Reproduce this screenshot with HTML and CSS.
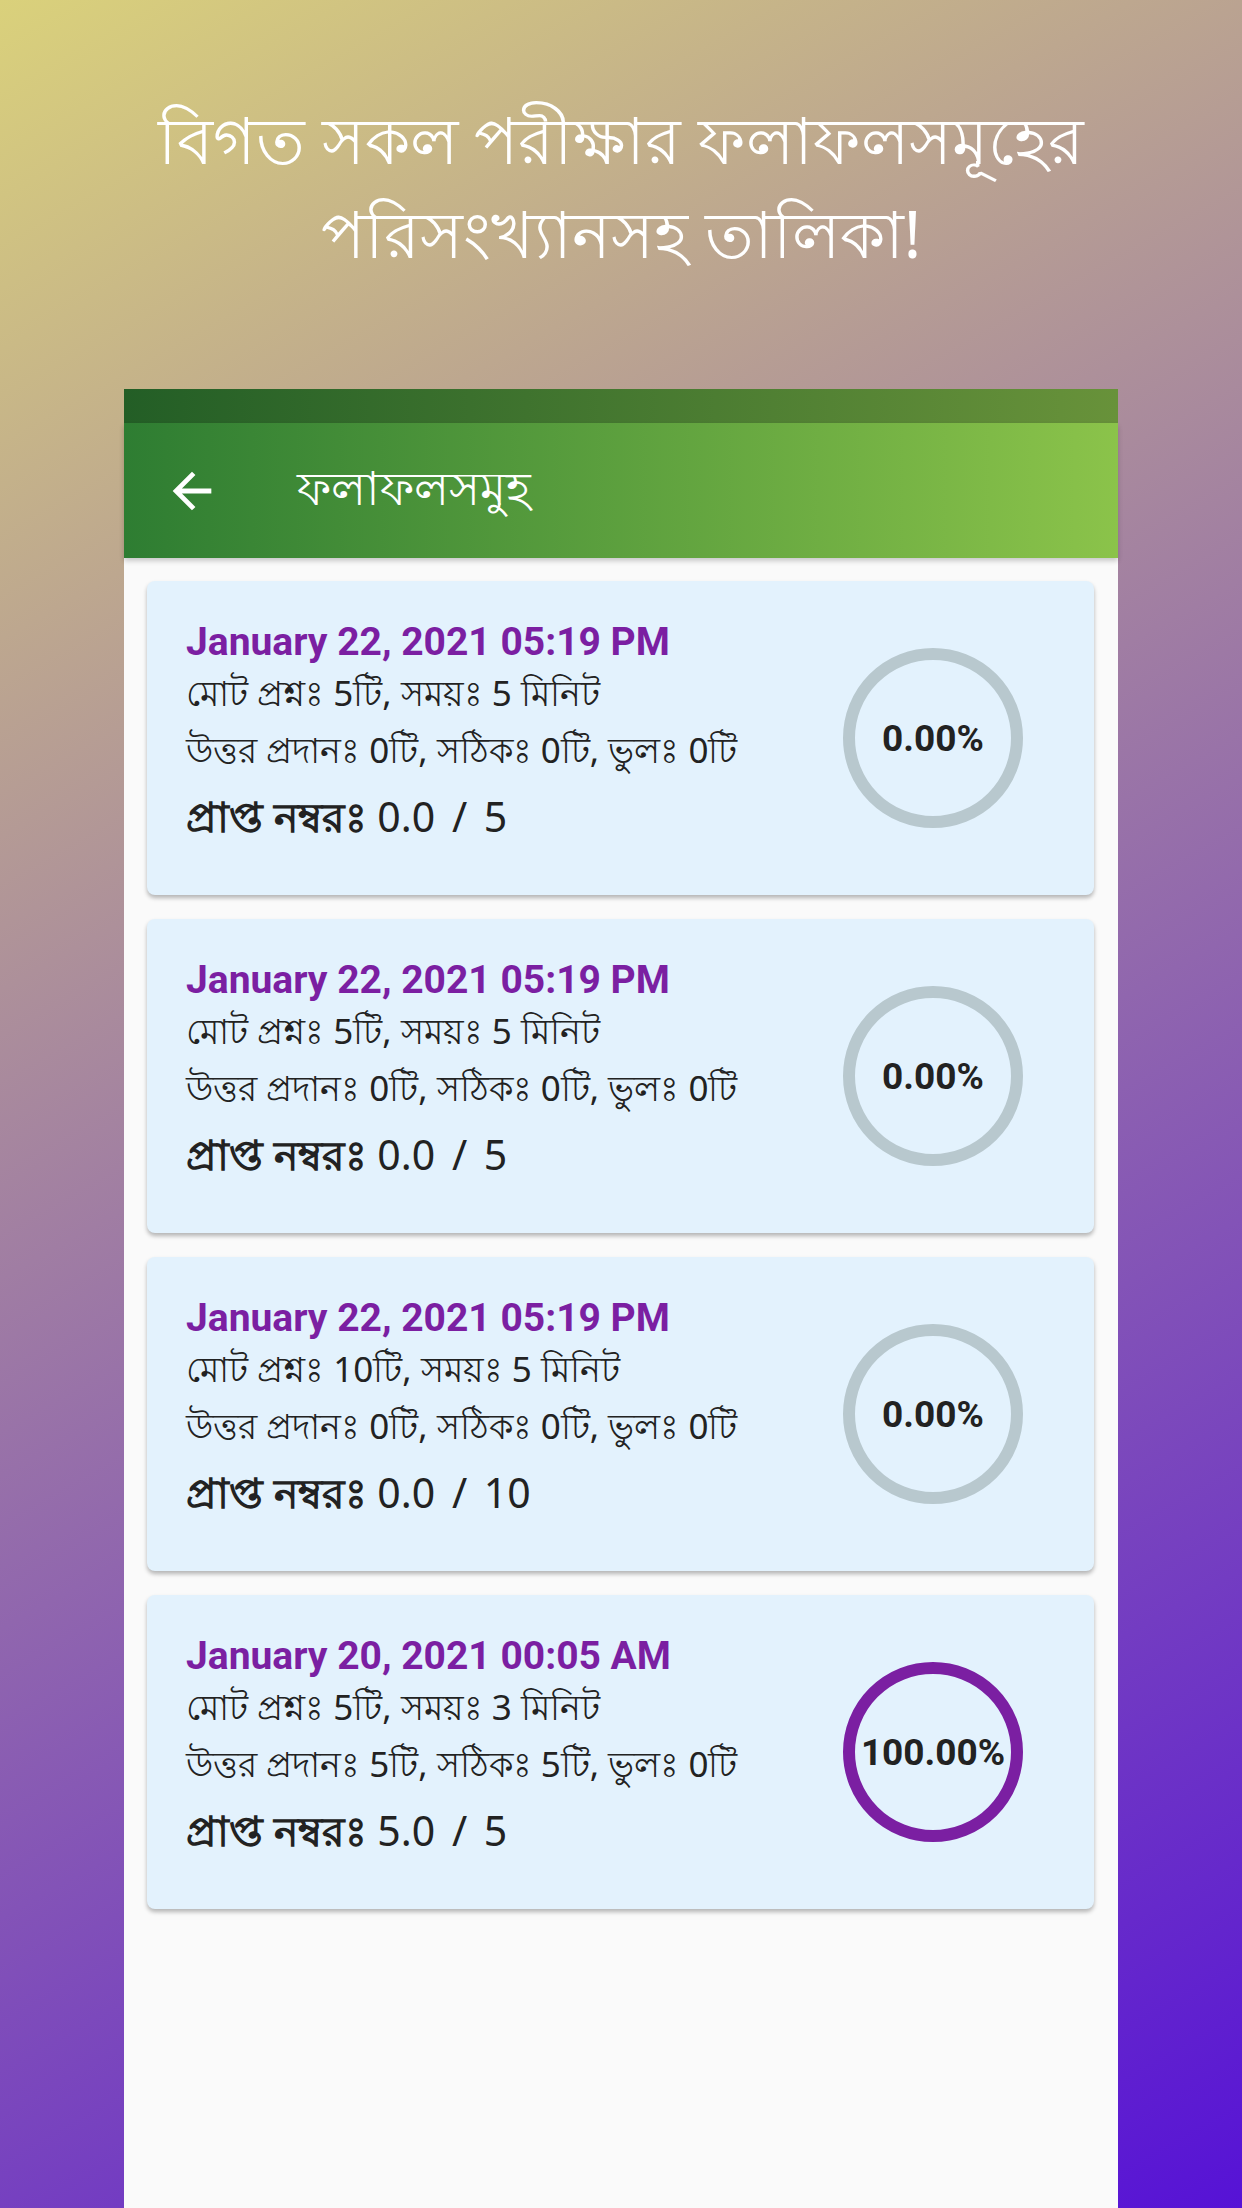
FILE: index.html
```html
<!DOCTYPE html>
<html lang="bn">
<head>
<meta charset="utf-8">
<title>ফলাফলসমুহ</title>
<link rel="stylesheet" href="styles.css">
</head>
<body>
<header class="hero">
  <h1 class="hero-title">বিগত সকল পরীক্ষার ফলাফলসমূহের<br>পরিসংখ্যানসহ তালিকা!</h1>
</header>
<main class="phone">
  <div class="statusbar"></div>
  <div class="toolbar">
    <svg class="back" viewBox="0 0 24 24" width="58" height="58"><path fill="#fff" d="M20 11H7.83l5.59-5.59L12 4l-8 8 8 8 1.41-1.41L7.83 13H20v-2z"/></svg>
    <span class="toolbar-title">ফলাফলসমুহ</span>
  </div>
  <div class="list">
    <section class="card">
      <div class="info">
        <div class="date">January 22, 2021 05:19 PM</div>
        <div class="line">মোট প্রশ্নঃ 5টি, সময়ঃ 5 মিনিট</div>
        <div class="line">উত্তর প্রদানঃ 0টি, সঠিকঃ 0টি, ভুলঃ 0টি</div>
        <div class="score">প্রাপ্ত নম্বরঃ <span class="num">0.0 / 5</span></div>
      </div>
      <div class="ring">0.00%</div>
    </section>
    <section class="card">
      <div class="info">
        <div class="date">January 22, 2021 05:19 PM</div>
        <div class="line">মোট প্রশ্নঃ 5টি, সময়ঃ 5 মিনিট</div>
        <div class="line">উত্তর প্রদানঃ 0টি, সঠিকঃ 0টি, ভুলঃ 0টি</div>
        <div class="score">প্রাপ্ত নম্বরঃ <span class="num">0.0 / 5</span></div>
      </div>
      <div class="ring">0.00%</div>
    </section>
    <section class="card">
      <div class="info">
        <div class="date">January 22, 2021 05:19 PM</div>
        <div class="line">মোট প্রশ্নঃ 10টি, সময়ঃ 5 মিনিট</div>
        <div class="line">উত্তর প্রদানঃ 0টি, সঠিকঃ 0টি, ভুলঃ 0টি</div>
        <div class="score">প্রাপ্ত নম্বরঃ <span class="num">0.0 / 10</span></div>
      </div>
      <div class="ring">0.00%</div>
    </section>
    <section class="card">
      <div class="info">
        <div class="date">January 20, 2021 00:05 AM</div>
        <div class="line">মোট প্রশ্নঃ 5টি, সময়ঃ 3 মিনিট</div>
        <div class="line">উত্তর প্রদানঃ 5টি, সঠিকঃ 5টি, ভুলঃ 0টি</div>
        <div class="score">প্রাপ্ত নম্বরঃ <span class="num">5.0 / 5</span></div>
      </div>
      <div class="ring ring-full">100.00%</div>
    </section>
  </div>
</main>
</body>
</html>
```
FILE: styles.css
```css
html, body {
  margin: 0;
  padding: 0;
}
body {
  width: 1242px;
  height: 2208px;
  overflow: hidden;
  background: linear-gradient(150.6deg, #dad17b 0%, #5612d6 100%);
  font-family: "Noto Sans", "Liberation Sans", sans-serif;
  display: flex;
  flex-direction: column;
}
.hero {
  height: 389px;
  box-sizing: border-box;
  padding-top: 92px;
}
.hero-title {
  margin: 0;
  color: #fff;
  text-align: center;
  font-weight: 400;
  font-size: 65px;
  line-height: 94px;
}
.phone {
  margin: 0 124px;
  flex: 1;
  background: #fafafa;
  display: flex;
  flex-direction: column;
}
.statusbar {
  height: 34px;
  background: linear-gradient(90deg, #235e26 0%, #68923a 100%);
}
.toolbar {
  height: 135px;
  background: linear-gradient(90deg, #2e7d32 0%, #8bc34a 100%);
  display: flex;
  align-items: center;
  padding-left: 39px;
  box-shadow: 0 3px 5px rgba(0,0,0,0.2);
  position: relative;
  z-index: 1;
}
.back {
  display: block;
}
.toolbar-title {
  margin-left: 76px;
  color: #fff;
  font-size: 47px;
  margin-top: 2px;
}
.list {
  padding: 23px 24px 0 23px;
  display: flex;
  flex-direction: column;
  gap: 24px;
}
.card {
  height: 314px;
  box-sizing: border-box;
  background: #e3f2fd;
  border-radius: 8px;
  box-shadow: 0 3px 4px rgba(0,0,0,0.28);
  display: flex;
  align-items: center;
  padding: 0 71px 0 39px;
}
.info {
  flex: 1;
  align-self: flex-start;
  padding-top: 39px;
  color: #222;
}
.date {
  font-family: Roboto, "Liberation Sans", sans-serif;
  font-weight: 700;
  font-size: 39px;
  line-height: 44px;
  color: #7b1fa2;
}
.line {
  font-size: 35px;
  line-height: 57px;
}
.score {
  font-size: 41px;
  font-weight: 700;
  line-height: 76px;
}
.num {
  font-weight: 400;
  word-spacing: 6px;
}
.ring {
  width: 180px;
  height: 180px;
  box-sizing: border-box;
  border: 12px solid #b8c8ce;
  border-radius: 50%;
  display: flex;
  align-items: center;
  justify-content: center;
  font-family: Roboto, "Liberation Sans", sans-serif;
  font-weight: 700;
  font-size: 37px;
  color: #222;
  white-space: nowrap;
}
.ring-full {
  border-color: #7b1fa2;
}
```
